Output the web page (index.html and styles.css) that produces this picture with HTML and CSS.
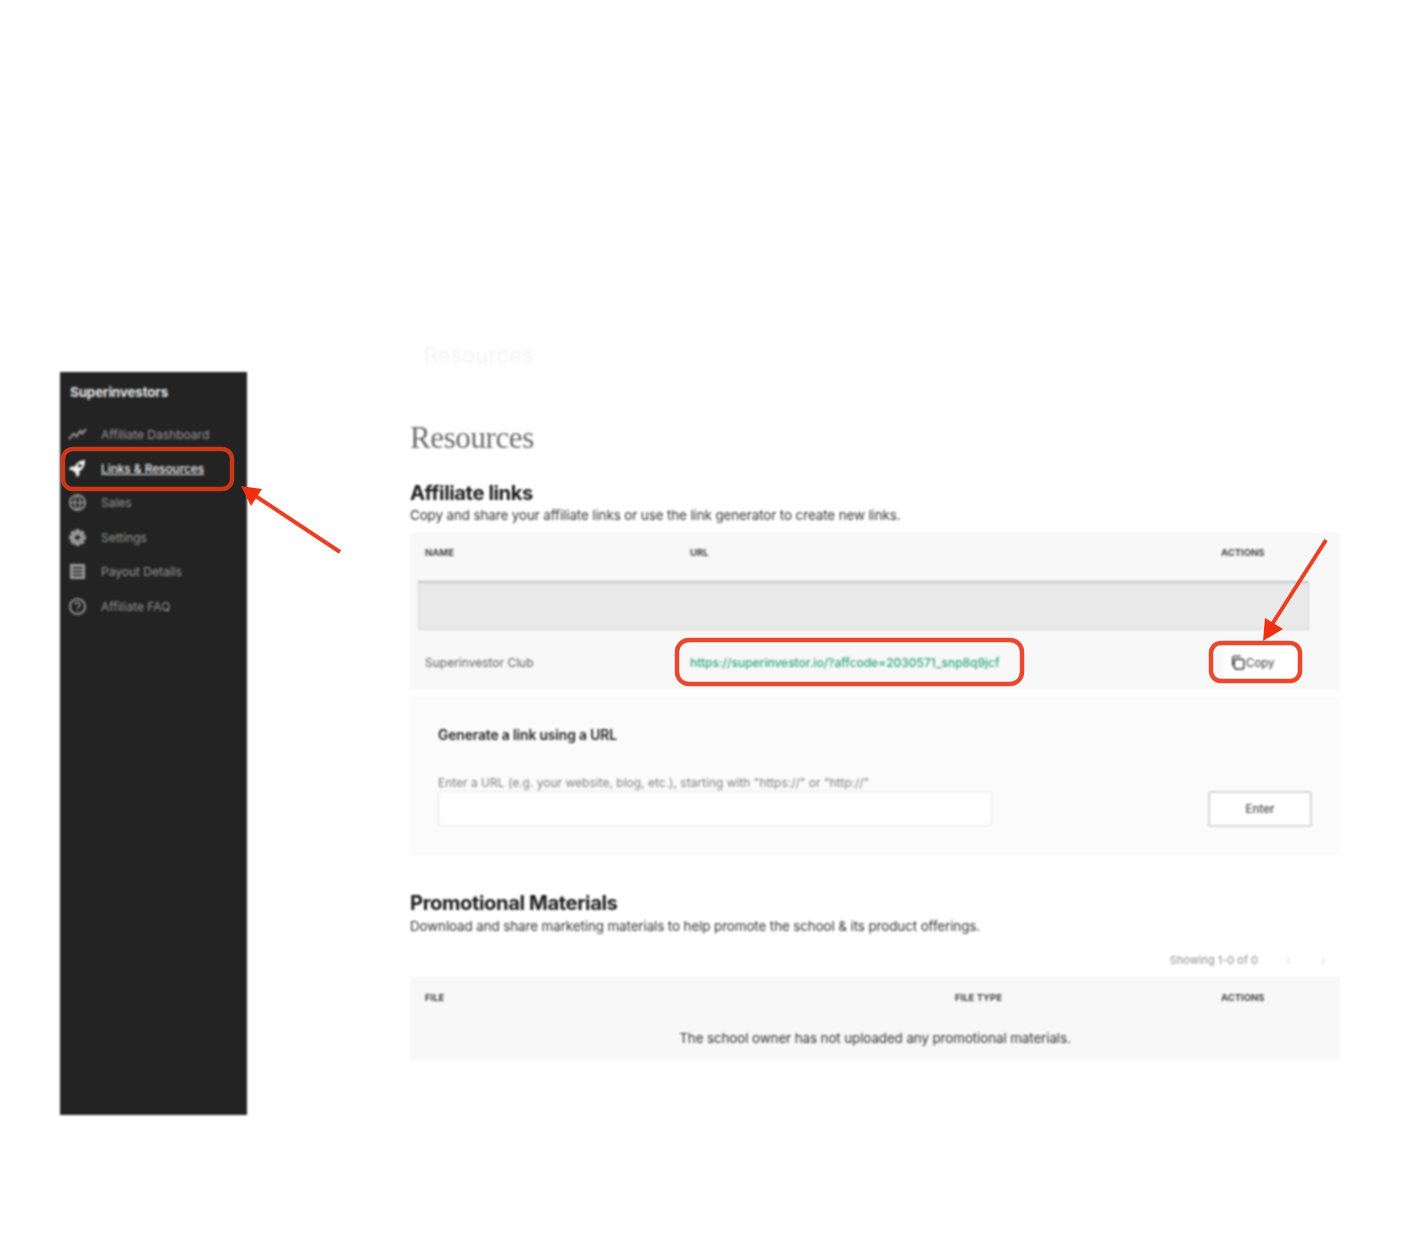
FILE: index.html
```html
<!DOCTYPE html>
<html lang="en">
<head>
<meta charset="utf-8">
<title>Resources</title>
<link rel="stylesheet" href="styles.css">
</head>
<body>
<div class="canvas">
  <div class="page">
    <aside class="sidebar">
      <div class="brand">Superinvestors</div>
      <nav class="nav">
        <a class="nav-item">
          <svg class="nav-icon" viewBox="0 0 20 20"><path d="M1 15l5-6 3 3 4-6 2 3 4-5" fill="none" stroke="currentColor" stroke-width="2"/></svg>
          <span>Affiliate Dashboard</span>
        </a>
        <a class="nav-item active">
          <svg class="nav-icon" viewBox="0 0 20 20"><path d="M18 1c-5 0-9 3-11 7H3L1 11l4 1 3 3 1 4 3-2v-4c4-2 6-7 6-12z" fill="currentColor"/><circle cx="12.500" cy="7" r="1.800" fill="#222"/></svg>
          <span>Links &amp; Resources</span>
        </a>
        <a class="nav-item">
          <svg class="nav-icon" viewBox="0 0 20 20"><circle cx="10" cy="10" r="8" fill="none" stroke="currentColor" stroke-width="2"/><path d="M10 2c-4 5-4 11 0 16M10 2c4 5 4 11 0 16M2 10h16" fill="none" stroke="currentColor" stroke-width="1.500"/></svg>
          <span>Sales</span>
        </a>
        <a class="nav-item">
          <svg class="nav-icon" viewBox="0 0 20 20"><path d="M8 1h4l.6 2.600 2.300-1.300 2.800 2.800-1.300 2.300L19 8v4l-2.600.6 1.300 2.300-2.800 2.800-2.300-1.300L12 19H8l-.6-2.600-2.300 1.300-2.800-2.800 1.300-2.300L1 12V8l2.600-.6-1.300-2.300 2.800-2.800 2.300 1.300z" fill="currentColor"/><circle cx="10" cy="10" r="2.500" fill="#222"/></svg>
          <span>Settings</span>
        </a>
        <a class="nav-item">
          <svg class="nav-icon" viewBox="0 0 20 20"><rect x="2" y="2" width="16" height="16" fill="currentColor"/><path d="M5 6h10M5 10h10M5 14h10" stroke="#222" stroke-width="1.500"/></svg>
          <span>Payout Details</span>
        </a>
        <a class="nav-item">
          <svg class="nav-icon" viewBox="0 0 20 20"><circle cx="10" cy="10" r="8" fill="none" stroke="currentColor" stroke-width="2"/><path d="M7.500 8a2.500 2.500 0 1 1 3.500 2.300c-.7.300-1 .8-1 1.700M10 14v1.500" fill="none" stroke="currentColor" stroke-width="1.500"/></svg>
          <span>Affiliate FAQ</span>
        </a>
      </nav>
    </aside>

    <main class="main">
      <div class="ghost">Resources</div>
      <h1 class="title">Resources</h1>

      <section class="links-section">
        <h2 class="heading">Affiliate links</h2>
        <p class="lead">Copy and share your affiliate links or use the link generator to create new links.</p>
        <div class="table">
          <div class="links-row head-row">
            <span>NAME</span>
            <span>URL</span>
            <span>ACTIONS</span>
          </div>
          <div class="banner"></div>
          <div class="links-row data-row">
            <span class="name">Superinvestor Club</span>
            <a class="url">https://superinvestor.io/?affcode=2030571_snp8q9jcf</a>
            <button class="copy">
              <svg class="copy-icon" viewBox="0 0 14 14"><rect x="4" y="4" width="9" height="9" rx="2" fill="none" stroke="currentColor" stroke-width="1.300"/><path d="M2.500 10V3a2 2 0 0 1 2-2H10" fill="none" stroke="currentColor" stroke-width="1.300"/></svg>
              Copy
            </button>
          </div>
        </div>
        <div class="generator">
          <div class="gen-title">Generate a link using a URL</div>
          <div class="gen-label">Enter a URL (e.g. your website, blog, etc.), starting with "https://" or "http://"</div>
          <div class="gen-controls">
            <div class="gen-input"></div>
            <button class="gen-button">Enter</button>
          </div>
        </div>
      </section>

      <section class="promo-section">
        <h2 class="heading">Promotional Materials</h2>
        <p class="lead">Download and share marketing materials to help promote the school &amp; its product offerings.</p>
        <div class="pager">
          <span>Showing 1-0 of 0</span>
          <span class="pager-arrows"><span>‹</span><span>›</span></span>
        </div>
        <div class="table">
          <div class="promo-row head-row">
            <span>FILE</span>
            <span>FILE TYPE</span>
            <span>ACTIONS</span>
          </div>
          <div class="empty">The school owner has not uploaded any promotional materials.</div>
        </div>
      </section>
    </main>
  </div>

  <svg class="annotations" viewBox="0 0 1411 1248">
    <rect class="mark mark-dark" x="63" y="449" width="169" height="40" rx="10"/>
    <rect class="mark" x="677" y="640" width="345" height="44" rx="12"/>
    <rect class="mark" x="1211" y="643" width="89" height="38" rx="10"/>
    <path class="arrow-line" d="M340 552L254 495"/>
    <path class="arrow-head" d="M241 486L262 489 251 506z"/>
    <path class="arrow-line" d="M1326 540L1271 626"/>
    <path class="arrow-head" d="M1263 641L1265 618 1283 629z"/>
  </svg>
</div>
</body>
</html>
```

FILE: styles.css
```css
* {
  box-sizing: border-box;
}

html,
body {
  margin: 0;
  background: #fff;
}

body {
  font-family: Inter, "Liberation Sans", sans-serif;
  color: #333;
}

.canvas {
  position: relative;
  width: 1411px;
  height: 1248px;
  overflow: hidden;
}

.page {
  display: flex;
  align-items: flex-start;
  gap: 163px;
  padding: 345px 0 0 60px;
  filter: blur(1px);
}

.sidebar {
  flex: 0 0 187px;
  height: 743px;
  margin-top: 27px;
  background: #232323;
  padding: 11px 0 0 8px;
}

.brand {
  height: 24px;
  margin-left: 2px;
  font-size: 13.500px;
  line-height: 18px;
  font-weight: 700;
  color: #e4e4e4;
  letter-spacing: -0.2px;
}

.nav {
  display: flex;
  flex-direction: column;
  margin-top: 10px;
}

.nav-item {
  display: flex;
  align-items: center;
  gap: 14px;
  height: 34.400px;
  font-size: 12px;
  color: #959595;
}

.nav-item.active {
  color: #eee;
  font-weight: 500;
  font-size: 11.800px;
}

.nav-item.active span {
  text-decoration: underline;
}

.nav-icon {
  flex: 0 0 19px;
  width: 19px;
  height: 19px;
}

.main {
  flex: 0 0 930px;
  display: flex;
  flex-direction: column;
}

.ghost {
  height: 20px;
  padding-left: 14px;
  font-size: 22px;
  line-height: 20px;
  color: #f4f4f4;
}

.title {
  margin: 59px 0 0;
  font-family: "Liberation Serif", serif;
  font-size: 31px;
  line-height: 28px;
  font-weight: 400;
  color: #6a6a6a;
  letter-spacing: -0.4px;
}

.links-section {
  margin-top: 29px;
}

.heading {
  margin: 0;
  font-size: 20.200px;
  line-height: 23px;
  font-weight: 700;
  color: #1a1a1a;
  letter-spacing: -0.4px;
}

.lead {
  margin: 0;
  font-size: 13.400px;
  line-height: 23px;
  color: #333;
  letter-spacing: -0.1px;
}

.table {
  background: #f8f8f8;
}

.links-section .table {
  margin-top: 6px;
}

.links-row,
.promo-row {
  display: grid;
  align-items: center;
  padding-left: 15px;
}

.links-row {
  grid-template-columns: 265px 531px 1fr;
}

.promo-row {
  grid-template-columns: 530px 266px 1fr;
}

.head-row {
  font-size: 9.500px;
  font-weight: 700;
  color: #444;
}

.links-row.head-row {
  height: 48px;
  padding-bottom: 9px;
}

.promo-row.head-row {
  height: 41px;
}

.banner {
  width: 891px;
  height: 49px;
  margin-left: 8px;
  background: #e9e9e9;
  border-top: 2px solid #c4c4c4;
  border-bottom: 1px solid #d4d4d4;
  border-left: 1px solid #d4d4d4;
  border-right: 1px solid #d4d4d4;
}

.data-row {
  height: 60px;
  padding-top: 5px;
  font-size: 12px;
}

.name {
  color: #5c5c5c;
}

.url {
  font-size: 12px;
  font-weight: 500;
  color: #2aa67c;
  white-space: nowrap;
}

.copy {
  display: flex;
  align-items: center;
  gap: 1px;
  width: 72px;
  height: 32px;
  margin-left: 3px;
  padding: 0 0 0 6px;
  border: 0;
  background: #fff;
  font-family: inherit;
  font-size: 11.500px;
  color: #333;
}

.copy-icon {
  flex: 0 0 15px;
  width: 15px;
  height: 15px;
}

.generator {
  height: 158px;
  margin-top: 7px;
  padding: 28px 28px 0;
  background: #fbfbfb;
}

.gen-title {
  font-size: 13.800px;
  line-height: 20px;
  font-weight: 600;
  color: #222;
  letter-spacing: -0.1px;
}

.gen-label {
  margin-top: 30px;
  font-size: 12px;
  line-height: 16px;
  color: #808080;
}

.gen-controls {
  display: flex;
  justify-content: space-between;
  align-items: flex-start;
  width: 874px;
}

.gen-input {
  width: 554px;
  height: 35px;
  background: #fff;
  border: 1.500px solid #e8e8e8;
  border-radius: 3px;
}

.gen-button {
  width: 104px;
  height: 36px;
  background: #fff;
  border: 2px solid #d6d6d6;
  border-radius: 3px;
  font-family: inherit;
  font-size: 11.500px;
  font-weight: 500;
  color: #444;
}

.promo-section {
  margin-top: 36px;
}

.promo-section .lead {
  margin-top: 1px;
}

.pager {
  display: flex;
  justify-content: flex-end;
  align-items: center;
  gap: 28px;
  height: 20px;
  margin-top: 12px;
  padding-right: 14px;
  font-size: 11px;
  color: #8f8f8f;
}

.pager-arrows {
  display: flex;
  gap: 30px;
  font-size: 13px;
  color: #dcdcdc;
}

.promo-section .table {
  margin-top: 7px;
}

.empty {
  height: 42px;
  text-align: center;
  font-size: 13.400px;
  line-height: 40px;
  color: #333;
  letter-spacing: -0.1px;
}

.annotations {
  position: absolute;
  inset: 0;
  width: 1411px;
  height: 1248px;
  filter: blur(0.7px);
}

.mark {
  fill: none;
  stroke: #e8492e;
  stroke-width: 4.500px;
}

.mark-dark {
  stroke: #cc3815;
}

.arrow-line {
  fill: none;
  stroke: #ea3f22;
  stroke-width: 4px;
}

.arrow-head {
  fill: #ef2f10;
}
```
